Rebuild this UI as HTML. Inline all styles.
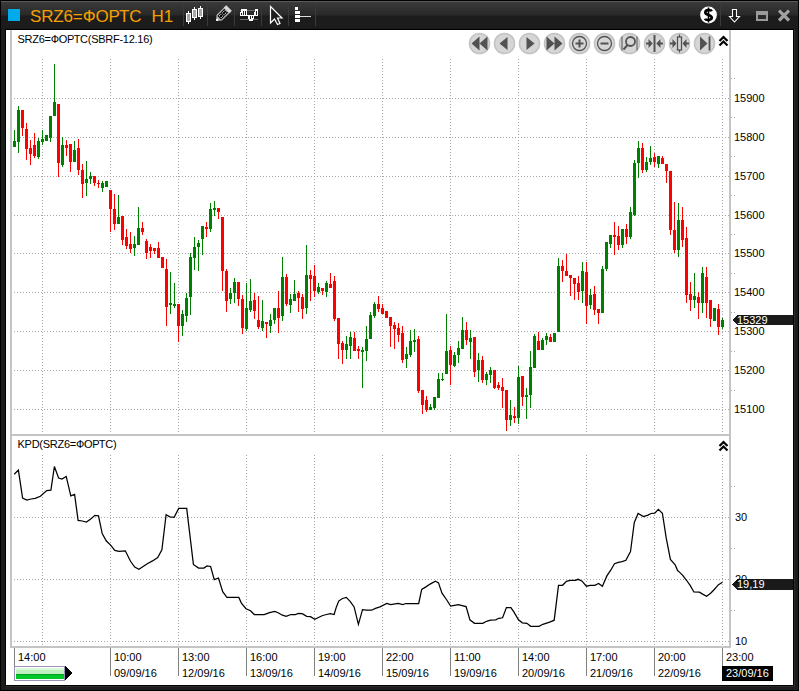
<!DOCTYPE html>
<html><head><meta charset="utf-8">
<style>
html,body{margin:0;padding:0;width:799px;height:691px;overflow:hidden;background:#1c1c1c;}
*{box-sizing:border-box;}
#frame{position:absolute;left:0;top:0;width:799px;height:691px;border:1px solid #000;background:#1c1c1c;}
#titlebar{position:absolute;left:1px;top:1px;width:797px;height:28px;background:linear-gradient(#5a5a5a 0px,#5a5a5a 1px,#3a3a3a 1px,#292929 14px,#1c1c1c 15px,#1c1c1c 27px,#111 28px);}
#content{position:absolute;left:5px;top:29px;width:789px;height:657px;border:1px solid #000;background:#fff;overflow:hidden;}
.t{position:absolute;font-family:"Liberation Sans",sans-serif;font-size:11px;line-height:11px;color:#000;white-space:nowrap;}
.ttl{position:absolute;font-family:"Liberation Sans",sans-serif;font-size:17px;line-height:17px;color:#f5a000;white-space:nowrap;}
svg{position:absolute;left:0;top:0;}
</style></head><body>
<div id="frame"></div>
<div id="titlebar"></div>
<div id="content"></div>
<div style="position:absolute;left:794px;top:29px;width:1px;height:658px;background:#2c2c2c"></div>
<div style="position:absolute;left:5px;top:686px;width:790px;height:1px;background:#2c2c2c"></div>
<svg width="799" height="691" viewBox="0 0 799 691" shape-rendering="crispEdges">
<!-- title bar stuff -->
<rect x="8" y="9" width="12" height="12" fill="#00aaeb"/>
<g fill="#3a3a3a">
<rect x="183" y="5" width="1" height="21"/><rect x="207" y="5" width="1" height="21"/><rect x="234" y="5" width="1" height="21"/>
<rect x="261" y="5" width="1" height="21"/><rect x="288" y="5" width="1" height="21"/><rect x="315" y="5" width="1" height="21"/>
<rect x="720" y="5" width="1" height="21"/>
</g>
</svg>
<svg width="799" height="691" viewBox="0 0 799 691">
<!-- candles icon -->
<g fill="#a8a8a8" stroke="#fff" stroke-width="1">
<path d="M188.5 11 V24 M194.5 7 V20 M200.5 6 V19" stroke="#fff" fill="none"/>
<rect x="186.5" y="13.5" width="4" height="8"/>
<rect x="192.5" y="9.5" width="4" height="8"/>
<rect x="198.5" y="8.5" width="4" height="8"/>
</g>
<!-- pencil -->
<g transform="translate(222.8,14.2) rotate(-45)">
<path d="M-9.5 0 L-5 -3.9 H8.5 V3.9 H-5 Z" fill="#b4b4b4"/>
<rect x="-5" y="-2.6" width="10" height="5.2" fill="#050505"/>
<rect x="5.3" y="-3.9" width="3.5" height="7.8" fill="#d8d8d8"/>
<circle cx="-8" cy="0" r="1.1" fill="#fff"/>
<g fill="#fff"><rect x="-4" y="-1.7" width="1" height="1"/><rect x="-2" y="-1.7" width="1" height="1"/><rect x="0" y="-1.7" width="1" height="1"/><rect x="2" y="-1.7" width="1" height="1"/><rect x="4" y="-1.7" width="1" height="1"/>
<rect x="-4" y="0.7" width="1" height="1"/><rect x="-2" y="0.7" width="1" height="1"/><rect x="0" y="0.7" width="1" height="1"/><rect x="2" y="0.7" width="1" height="1"/><rect x="4" y="0.7" width="1" height="1"/></g>
</g>
<!-- bars icon -->
<g shape-rendering="crispEdges">
<rect x="240" y="10" width="18" height="1" fill="#6a6a6a"/>
<rect x="240" y="19" width="18" height="1" fill="#6a6a6a"/>
<g fill="#fff">
<rect x="240" y="12" width="2" height="4"/><rect x="241" y="9" width="6" height="7"/><rect x="240" y="15" width="18" height="1"/>
<rect x="248" y="15" width="6" height="4"/><rect x="249" y="18" width="4" height="3"/><rect x="255" y="9" width="3" height="7"/><rect x="254" y="12" width="2" height="4"/>
</g>
<g fill="#222"><rect x="241" y="13" width="1" height="2"/><rect x="243" y="11" width="1" height="4"/><rect x="245" y="11" width="1" height="4"/>
<rect x="250" y="16" width="1" height="3"/><rect x="252" y="16" width="1" height="2"/><rect x="256" y="11" width="1" height="4"/></g>
</g>
<!-- cursor arrow -->
<path d="M270.5 6.5 L270.5 23 L274.5 19 L277.5 24.5 L280 23.5 L277.5 18 L282 18 Z" fill="#1e1e1e" stroke="#fff" stroke-width="1.2" stroke-linejoin="miter"/>
<!-- depth icon -->
<g fill="#fff">
<rect x="295" y="7" width="3" height="3"/><rect x="295" y="11" width="5" height="3"/><rect x="295" y="15" width="5" height="3"/><rect x="295" y="19" width="5" height="3"/>
<rect x="300" y="16" width="11" height="1" fill="#ddd"/>
</g>
<!-- dollar -->
<circle cx="708.5" cy="15" r="8.4" fill="#fff"/>
<path d="M708.5 7.5 V22.5" stroke="#000" stroke-width="1.6"/><path d="M711.8 11.3 C711 9.6 705.3 9.4 705.3 12.4 C705.3 15.4 711.8 14.4 711.8 17.6 C711.8 20.6 705.8 20.4 705 18.7" fill="none" stroke="#000" stroke-width="2.6"/>
<!-- down arrow -->
<path d="M732.5 9.5 H736.5 V16.5 H739.5 L734.5 22 L729.5 16.5 H732.5 Z" fill="#1e1e1e" stroke="#fff" stroke-width="1.1"/>
<!-- restore -->
<rect x="756" y="11" width="12" height="10" fill="#9a9a9a"/>
<rect x="758" y="15" width="8" height="4" fill="#2a2a2a"/>
<!-- close -->
<path d="M779 10.5 L789 20.5 M789 10.5 L779 20.5" stroke="#1a1a1a" stroke-width="5"/><path d="M779 10.5 L789 20.5 M789 10.5 L779 20.5" stroke="#a0a0a0" stroke-width="3.2"/>
</svg>
<div class="ttl" style="left:30px;top:8px;letter-spacing:-0.15px;">SRZ6=ФОРТС</div>
<div class="ttl" style="left:151.5px;top:8px;">H1</div>

<svg width="799" height="691" viewBox="0 0 799 691" shape-rendering="crispEdges">
<!-- panel lines -->
<rect x="10" y="30" width="2" height="618" fill="#c4c4c4"/>
<rect x="729" y="30" width="2" height="618" fill="#c4c4c4"/>
<rect x="10" y="434" width="721" height="2" fill="#c4c4c4"/>
<rect x="10" y="646" width="721" height="2" fill="#c4c4c4"/>
<line x1="14" y1="98.5" x2="729" y2="98.5" stroke="#a8a8a8" stroke-width="1" stroke-dasharray="1 2"/>
<line x1="14" y1="137.5" x2="729" y2="137.5" stroke="#a8a8a8" stroke-width="1" stroke-dasharray="1 2"/>
<line x1="14" y1="176.5" x2="729" y2="176.5" stroke="#a8a8a8" stroke-width="1" stroke-dasharray="1 2"/>
<line x1="14" y1="215.5" x2="729" y2="215.5" stroke="#a8a8a8" stroke-width="1" stroke-dasharray="1 2"/>
<line x1="14" y1="253.5" x2="729" y2="253.5" stroke="#a8a8a8" stroke-width="1" stroke-dasharray="1 2"/>
<line x1="14" y1="292.5" x2="729" y2="292.5" stroke="#a8a8a8" stroke-width="1" stroke-dasharray="1 2"/>
<line x1="14" y1="331.5" x2="729" y2="331.5" stroke="#a8a8a8" stroke-width="1" stroke-dasharray="1 2"/>
<line x1="14" y1="370.5" x2="729" y2="370.5" stroke="#a8a8a8" stroke-width="1" stroke-dasharray="1 2"/>
<line x1="14" y1="409.5" x2="729" y2="409.5" stroke="#a8a8a8" stroke-width="1" stroke-dasharray="1 2"/>
<line x1="14" y1="517.5" x2="729" y2="517.5" stroke="#a8a8a8" stroke-width="1" stroke-dasharray="1 2"/>
<line x1="14" y1="579.5" x2="729" y2="579.5" stroke="#a8a8a8" stroke-width="1" stroke-dasharray="1 2"/>
<line x1="14" y1="641.5" x2="729" y2="641.5" stroke="#a8a8a8" stroke-width="1" stroke-dasharray="1 2"/>
<line x1="42.5" y1="59" x2="42.5" y2="434" stroke="#a8a8a8" stroke-width="1" stroke-dasharray="1 2"/>
<line x1="42.5" y1="455" x2="42.5" y2="646" stroke="#a8a8a8" stroke-width="1" stroke-dasharray="1 2"/>
<line x1="110.5" y1="59" x2="110.5" y2="434" stroke="#a8a8a8" stroke-width="1" stroke-dasharray="1 2"/>
<line x1="110.5" y1="455" x2="110.5" y2="646" stroke="#a8a8a8" stroke-width="1" stroke-dasharray="1 2"/>
<line x1="178.5" y1="59" x2="178.5" y2="434" stroke="#a8a8a8" stroke-width="1" stroke-dasharray="1 2"/>
<line x1="178.5" y1="455" x2="178.5" y2="646" stroke="#a8a8a8" stroke-width="1" stroke-dasharray="1 2"/>
<line x1="246.5" y1="59" x2="246.5" y2="434" stroke="#a8a8a8" stroke-width="1" stroke-dasharray="1 2"/>
<line x1="246.5" y1="455" x2="246.5" y2="646" stroke="#a8a8a8" stroke-width="1" stroke-dasharray="1 2"/>
<line x1="314.5" y1="59" x2="314.5" y2="434" stroke="#a8a8a8" stroke-width="1" stroke-dasharray="1 2"/>
<line x1="314.5" y1="455" x2="314.5" y2="646" stroke="#a8a8a8" stroke-width="1" stroke-dasharray="1 2"/>
<line x1="382.5" y1="59" x2="382.5" y2="434" stroke="#a8a8a8" stroke-width="1" stroke-dasharray="1 2"/>
<line x1="382.5" y1="455" x2="382.5" y2="646" stroke="#a8a8a8" stroke-width="1" stroke-dasharray="1 2"/>
<line x1="450.5" y1="59" x2="450.5" y2="434" stroke="#a8a8a8" stroke-width="1" stroke-dasharray="1 2"/>
<line x1="450.5" y1="455" x2="450.5" y2="646" stroke="#a8a8a8" stroke-width="1" stroke-dasharray="1 2"/>
<line x1="518.5" y1="59" x2="518.5" y2="434" stroke="#a8a8a8" stroke-width="1" stroke-dasharray="1 2"/>
<line x1="518.5" y1="455" x2="518.5" y2="646" stroke="#a8a8a8" stroke-width="1" stroke-dasharray="1 2"/>
<line x1="586.5" y1="59" x2="586.5" y2="434" stroke="#a8a8a8" stroke-width="1" stroke-dasharray="1 2"/>
<line x1="586.5" y1="455" x2="586.5" y2="646" stroke="#a8a8a8" stroke-width="1" stroke-dasharray="1 2"/>
<line x1="654.5" y1="59" x2="654.5" y2="434" stroke="#a8a8a8" stroke-width="1" stroke-dasharray="1 2"/>
<line x1="654.5" y1="455" x2="654.5" y2="646" stroke="#a8a8a8" stroke-width="1" stroke-dasharray="1 2"/>
<line x1="722.5" y1="59" x2="722.5" y2="434" stroke="#a8a8a8" stroke-width="1" stroke-dasharray="1 2"/>
<line x1="722.5" y1="455" x2="722.5" y2="646" stroke="#a8a8a8" stroke-width="1" stroke-dasharray="1 2"/>
<rect x="731" y="117" width="1" height="1" fill="#a8a8a8"/><rect x="734" y="117" width="1" height="1" fill="#a8a8a8"/>
<rect x="731" y="156" width="1" height="1" fill="#a8a8a8"/><rect x="734" y="156" width="1" height="1" fill="#a8a8a8"/>
<rect x="731" y="195" width="1" height="1" fill="#a8a8a8"/><rect x="734" y="195" width="1" height="1" fill="#a8a8a8"/>
<rect x="731" y="234" width="1" height="1" fill="#a8a8a8"/><rect x="734" y="234" width="1" height="1" fill="#a8a8a8"/>
<rect x="731" y="273" width="1" height="1" fill="#a8a8a8"/><rect x="734" y="273" width="1" height="1" fill="#a8a8a8"/>
<rect x="731" y="312" width="1" height="1" fill="#a8a8a8"/><rect x="734" y="312" width="1" height="1" fill="#a8a8a8"/>
<rect x="731" y="351" width="1" height="1" fill="#a8a8a8"/><rect x="734" y="351" width="1" height="1" fill="#a8a8a8"/>
<rect x="731" y="390" width="1" height="1" fill="#a8a8a8"/><rect x="734" y="390" width="1" height="1" fill="#a8a8a8"/>
<rect x="731" y="78" width="1" height="1" fill="#a8a8a8"/><rect x="734" y="78" width="1" height="1" fill="#a8a8a8"/>
<rect x="731" y="486" width="1" height="1" fill="#a8a8a8"/><rect x="734" y="486" width="1" height="1" fill="#a8a8a8"/>
<rect x="731" y="548" width="1" height="1" fill="#a8a8a8"/><rect x="734" y="548" width="1" height="1" fill="#a8a8a8"/>
<rect x="731" y="610" width="1" height="1" fill="#a8a8a8"/><rect x="734" y="610" width="1" height="1" fill="#a8a8a8"/>
<rect x="14" y="130" width="1" height="17" fill="#008000"/>
<rect x="13" y="141" width="3" height="6" fill="#008000"/>
<rect x="18" y="106" width="1" height="47" fill="#008000"/>
<rect x="17" y="110" width="3" height="32" fill="#008000"/>
<rect x="22" y="110" width="1" height="26" fill="#ff0000"/>
<rect x="21" y="110" width="3" height="18" fill="#ff0000"/>
<rect x="26" y="123" width="1" height="37" fill="#ff0000"/>
<rect x="25" y="129" width="3" height="20" fill="#ff0000"/>
<rect x="30" y="140" width="1" height="25" fill="#ff0000"/>
<rect x="29" y="148" width="3" height="6" fill="#ff0000"/>
<rect x="34" y="133" width="1" height="25" fill="#ff0000"/>
<rect x="33" y="145" width="3" height="11" fill="#ff0000"/>
<rect x="38" y="138" width="1" height="21" fill="#008000"/>
<rect x="37" y="141" width="3" height="16" fill="#008000"/>
<rect x="42" y="130" width="1" height="15" fill="#008000"/>
<rect x="41" y="139" width="3" height="3" fill="#008000"/>
<rect x="46" y="135" width="1" height="6" fill="#008000"/>
<rect x="45" y="135" width="3" height="6" fill="#008000"/>
<rect x="50" y="116" width="1" height="26" fill="#008000"/>
<rect x="49" y="116" width="3" height="22" fill="#008000"/>
<rect x="54" y="64" width="1" height="52" fill="#008000"/>
<rect x="53" y="102" width="3" height="14" fill="#008000"/>
<rect x="58" y="104" width="1" height="73" fill="#ff0000"/>
<rect x="57" y="104" width="3" height="59" fill="#ff0000"/>
<rect x="62" y="137" width="1" height="30" fill="#008000"/>
<rect x="61" y="145" width="3" height="20" fill="#008000"/>
<rect x="66" y="140" width="1" height="16" fill="#ff0000"/>
<rect x="65" y="145" width="3" height="3" fill="#ff0000"/>
<rect x="70" y="144" width="1" height="28" fill="#ff0000"/>
<rect x="69" y="144" width="3" height="18" fill="#ff0000"/>
<rect x="74" y="141" width="1" height="21" fill="#008000"/>
<rect x="73" y="150" width="3" height="12" fill="#008000"/>
<rect x="78" y="139" width="1" height="36" fill="#ff0000"/>
<rect x="77" y="148" width="3" height="22" fill="#ff0000"/>
<rect x="82" y="164" width="1" height="34" fill="#ff0000"/>
<rect x="81" y="170" width="3" height="14" fill="#ff0000"/>
<rect x="86" y="161" width="1" height="35" fill="#008000"/>
<rect x="85" y="179" width="3" height="4" fill="#008000"/>
<rect x="90" y="172" width="1" height="12" fill="#008000"/>
<rect x="89" y="176" width="3" height="3" fill="#008000"/>
<rect x="94" y="176" width="1" height="10" fill="#ff0000"/>
<rect x="93" y="176" width="3" height="7" fill="#ff0000"/>
<rect x="98" y="180" width="1" height="8" fill="#ff0000"/>
<rect x="97" y="183" width="3" height="1" fill="#ff0000"/>
<rect x="102" y="181" width="1" height="11" fill="#008000"/>
<rect x="101" y="183" width="3" height="5" fill="#008000"/>
<rect x="106" y="181" width="1" height="6" fill="#008000"/>
<rect x="105" y="181" width="3" height="6" fill="#008000"/>
<rect x="110" y="190" width="1" height="42" fill="#ff0000"/>
<rect x="109" y="190" width="3" height="19" fill="#ff0000"/>
<rect x="114" y="194" width="1" height="36" fill="#ff0000"/>
<rect x="113" y="209" width="3" height="15" fill="#ff0000"/>
<rect x="118" y="195" width="1" height="29" fill="#008000"/>
<rect x="117" y="217" width="3" height="7" fill="#008000"/>
<rect x="122" y="216" width="1" height="29" fill="#ff0000"/>
<rect x="121" y="216" width="3" height="24" fill="#ff0000"/>
<rect x="126" y="229" width="1" height="20" fill="#ff0000"/>
<rect x="125" y="237" width="3" height="9" fill="#ff0000"/>
<rect x="130" y="232" width="1" height="21" fill="#ff0000"/>
<rect x="129" y="244" width="3" height="5" fill="#ff0000"/>
<rect x="134" y="236" width="1" height="20" fill="#008000"/>
<rect x="133" y="244" width="3" height="4" fill="#008000"/>
<rect x="138" y="207" width="1" height="38" fill="#008000"/>
<rect x="137" y="228" width="3" height="17" fill="#008000"/>
<rect x="142" y="222" width="1" height="13" fill="#ff0000"/>
<rect x="141" y="228" width="3" height="4" fill="#ff0000"/>
<rect x="146" y="239" width="1" height="20" fill="#ff0000"/>
<rect x="145" y="241" width="3" height="12" fill="#ff0000"/>
<rect x="150" y="244" width="1" height="14" fill="#ff0000"/>
<rect x="149" y="247" width="3" height="4" fill="#ff0000"/>
<rect x="154" y="248" width="1" height="6" fill="#ff0000"/>
<rect x="153" y="248" width="3" height="3" fill="#ff0000"/>
<rect x="158" y="242" width="1" height="16" fill="#ff0000"/>
<rect x="157" y="248" width="3" height="10" fill="#ff0000"/>
<rect x="162" y="257" width="1" height="11" fill="#ff0000"/>
<rect x="161" y="257" width="3" height="11" fill="#ff0000"/>
<rect x="166" y="259" width="1" height="67" fill="#ff0000"/>
<rect x="165" y="269" width="3" height="38" fill="#ff0000"/>
<rect x="170" y="272" width="1" height="42" fill="#008000"/>
<rect x="169" y="303" width="3" height="2" fill="#008000"/>
<rect x="174" y="283" width="1" height="25" fill="#008000"/>
<rect x="173" y="304" width="3" height="2" fill="#008000"/>
<rect x="178" y="304" width="1" height="38" fill="#ff0000"/>
<rect x="177" y="304" width="3" height="22" fill="#ff0000"/>
<rect x="182" y="310" width="1" height="26" fill="#008000"/>
<rect x="181" y="314" width="3" height="12" fill="#008000"/>
<rect x="186" y="293" width="1" height="29" fill="#008000"/>
<rect x="185" y="298" width="3" height="18" fill="#008000"/>
<rect x="190" y="253" width="1" height="62" fill="#008000"/>
<rect x="189" y="257" width="3" height="40" fill="#008000"/>
<rect x="194" y="237" width="1" height="33" fill="#008000"/>
<rect x="193" y="247" width="3" height="11" fill="#008000"/>
<rect x="198" y="240" width="1" height="31" fill="#008000"/>
<rect x="197" y="243" width="3" height="4" fill="#008000"/>
<rect x="202" y="226" width="1" height="29" fill="#008000"/>
<rect x="201" y="226" width="3" height="13" fill="#008000"/>
<rect x="206" y="222" width="1" height="15" fill="#ff0000"/>
<rect x="205" y="227" width="3" height="2" fill="#ff0000"/>
<rect x="210" y="203" width="1" height="29" fill="#008000"/>
<rect x="209" y="209" width="3" height="20" fill="#008000"/>
<rect x="214" y="201" width="1" height="15" fill="#008000"/>
<rect x="213" y="208" width="3" height="2" fill="#008000"/>
<rect x="218" y="208" width="1" height="11" fill="#ff0000"/>
<rect x="217" y="208" width="3" height="4" fill="#ff0000"/>
<rect x="222" y="217" width="1" height="74" fill="#ff0000"/>
<rect x="221" y="217" width="3" height="54" fill="#ff0000"/>
<rect x="226" y="269" width="1" height="43" fill="#ff0000"/>
<rect x="225" y="271" width="3" height="30" fill="#ff0000"/>
<rect x="230" y="288" width="1" height="16" fill="#008000"/>
<rect x="229" y="293" width="3" height="6" fill="#008000"/>
<rect x="234" y="278" width="1" height="25" fill="#008000"/>
<rect x="233" y="282" width="3" height="11" fill="#008000"/>
<rect x="238" y="282" width="1" height="24" fill="#ff0000"/>
<rect x="237" y="282" width="3" height="17" fill="#ff0000"/>
<rect x="242" y="295" width="1" height="39" fill="#ff0000"/>
<rect x="241" y="299" width="3" height="29" fill="#ff0000"/>
<rect x="246" y="283" width="1" height="48" fill="#008000"/>
<rect x="245" y="308" width="3" height="21" fill="#008000"/>
<rect x="250" y="279" width="1" height="33" fill="#008000"/>
<rect x="249" y="301" width="3" height="9" fill="#008000"/>
<rect x="254" y="293" width="1" height="26" fill="#ff0000"/>
<rect x="253" y="300" width="3" height="11" fill="#ff0000"/>
<rect x="258" y="296" width="1" height="33" fill="#ff0000"/>
<rect x="257" y="320" width="3" height="7" fill="#ff0000"/>
<rect x="262" y="300" width="1" height="31" fill="#008000"/>
<rect x="261" y="321" width="3" height="7" fill="#008000"/>
<rect x="266" y="322" width="1" height="16" fill="#ff0000"/>
<rect x="265" y="322" width="3" height="2" fill="#ff0000"/>
<rect x="270" y="314" width="1" height="19" fill="#008000"/>
<rect x="269" y="320" width="3" height="6" fill="#008000"/>
<rect x="274" y="308" width="1" height="16" fill="#008000"/>
<rect x="273" y="308" width="3" height="12" fill="#008000"/>
<rect x="278" y="291" width="1" height="42" fill="#ff0000"/>
<rect x="277" y="308" width="3" height="10" fill="#ff0000"/>
<rect x="282" y="257" width="1" height="64" fill="#008000"/>
<rect x="281" y="277" width="3" height="39" fill="#008000"/>
<rect x="286" y="274" width="1" height="32" fill="#ff0000"/>
<rect x="285" y="277" width="3" height="27" fill="#ff0000"/>
<rect x="290" y="294" width="1" height="19" fill="#008000"/>
<rect x="289" y="299" width="3" height="6" fill="#008000"/>
<rect x="294" y="280" width="1" height="21" fill="#008000"/>
<rect x="293" y="294" width="3" height="7" fill="#008000"/>
<rect x="298" y="291" width="1" height="21" fill="#ff0000"/>
<rect x="297" y="293" width="3" height="5" fill="#ff0000"/>
<rect x="302" y="294" width="1" height="25" fill="#ff0000"/>
<rect x="301" y="297" width="3" height="12" fill="#ff0000"/>
<rect x="306" y="245" width="1" height="69" fill="#008000"/>
<rect x="305" y="275" width="3" height="33" fill="#008000"/>
<rect x="310" y="270" width="1" height="31" fill="#ff0000"/>
<rect x="309" y="275" width="3" height="4" fill="#ff0000"/>
<rect x="314" y="265" width="1" height="32" fill="#ff0000"/>
<rect x="313" y="276" width="3" height="15" fill="#ff0000"/>
<rect x="318" y="283" width="1" height="11" fill="#008000"/>
<rect x="317" y="287" width="3" height="5" fill="#008000"/>
<rect x="322" y="288" width="1" height="7" fill="#ff0000"/>
<rect x="321" y="288" width="3" height="3" fill="#ff0000"/>
<rect x="326" y="281" width="1" height="16" fill="#008000"/>
<rect x="325" y="283" width="3" height="9" fill="#008000"/>
<rect x="330" y="273" width="1" height="15" fill="#ff0000"/>
<rect x="329" y="284" width="3" height="4" fill="#ff0000"/>
<rect x="334" y="276" width="1" height="45" fill="#ff0000"/>
<rect x="333" y="281" width="3" height="38" fill="#ff0000"/>
<rect x="338" y="318" width="1" height="41" fill="#ff0000"/>
<rect x="337" y="318" width="3" height="26" fill="#ff0000"/>
<rect x="342" y="341" width="1" height="23" fill="#ff0000"/>
<rect x="341" y="343" width="3" height="7" fill="#ff0000"/>
<rect x="346" y="336" width="1" height="23" fill="#008000"/>
<rect x="345" y="344" width="3" height="6" fill="#008000"/>
<rect x="350" y="332" width="1" height="27" fill="#008000"/>
<rect x="349" y="337" width="3" height="9" fill="#008000"/>
<rect x="354" y="332" width="1" height="19" fill="#ff0000"/>
<rect x="353" y="338" width="3" height="13" fill="#ff0000"/>
<rect x="358" y="346" width="1" height="13" fill="#ff0000"/>
<rect x="357" y="349" width="3" height="2" fill="#ff0000"/>
<rect x="362" y="347" width="1" height="41" fill="#008000"/>
<rect x="361" y="350" width="3" height="2" fill="#008000"/>
<rect x="366" y="326" width="1" height="35" fill="#008000"/>
<rect x="365" y="339" width="3" height="12" fill="#008000"/>
<rect x="370" y="312" width="1" height="27" fill="#008000"/>
<rect x="369" y="315" width="3" height="24" fill="#008000"/>
<rect x="374" y="302" width="1" height="16" fill="#008000"/>
<rect x="373" y="304" width="3" height="12" fill="#008000"/>
<rect x="378" y="296" width="1" height="16" fill="#ff0000"/>
<rect x="377" y="304" width="3" height="5" fill="#ff0000"/>
<rect x="382" y="304" width="1" height="10" fill="#ff0000"/>
<rect x="381" y="308" width="3" height="6" fill="#ff0000"/>
<rect x="386" y="311" width="1" height="7" fill="#ff0000"/>
<rect x="385" y="311" width="3" height="7" fill="#ff0000"/>
<rect x="390" y="317" width="1" height="30" fill="#ff0000"/>
<rect x="389" y="317" width="3" height="9" fill="#ff0000"/>
<rect x="394" y="322" width="1" height="27" fill="#ff0000"/>
<rect x="393" y="325" width="3" height="4" fill="#ff0000"/>
<rect x="398" y="323" width="1" height="19" fill="#ff0000"/>
<rect x="397" y="328" width="3" height="7" fill="#ff0000"/>
<rect x="402" y="326" width="1" height="37" fill="#ff0000"/>
<rect x="401" y="333" width="3" height="27" fill="#ff0000"/>
<rect x="406" y="347" width="1" height="21" fill="#008000"/>
<rect x="405" y="354" width="3" height="5" fill="#008000"/>
<rect x="410" y="330" width="1" height="27" fill="#008000"/>
<rect x="409" y="341" width="3" height="14" fill="#008000"/>
<rect x="414" y="329" width="1" height="23" fill="#008000"/>
<rect x="413" y="340" width="3" height="2" fill="#008000"/>
<rect x="418" y="336" width="1" height="57" fill="#ff0000"/>
<rect x="417" y="339" width="3" height="52" fill="#ff0000"/>
<rect x="422" y="390" width="1" height="24" fill="#ff0000"/>
<rect x="421" y="390" width="3" height="15" fill="#ff0000"/>
<rect x="426" y="396" width="1" height="16" fill="#ff0000"/>
<rect x="425" y="400" width="3" height="10" fill="#ff0000"/>
<rect x="430" y="404" width="1" height="6" fill="#008000"/>
<rect x="429" y="407" width="3" height="3" fill="#008000"/>
<rect x="434" y="397" width="1" height="13" fill="#008000"/>
<rect x="433" y="397" width="3" height="11" fill="#008000"/>
<rect x="438" y="373" width="1" height="25" fill="#008000"/>
<rect x="437" y="379" width="3" height="19" fill="#008000"/>
<rect x="442" y="373" width="1" height="8" fill="#008000"/>
<rect x="441" y="379" width="3" height="1" fill="#008000"/>
<rect x="446" y="314" width="1" height="60" fill="#008000"/>
<rect x="445" y="351" width="3" height="23" fill="#008000"/>
<rect x="450" y="346" width="1" height="39" fill="#ff0000"/>
<rect x="449" y="350" width="3" height="15" fill="#ff0000"/>
<rect x="454" y="352" width="1" height="15" fill="#008000"/>
<rect x="453" y="355" width="3" height="11" fill="#008000"/>
<rect x="458" y="341" width="1" height="22" fill="#008000"/>
<rect x="457" y="348" width="3" height="7" fill="#008000"/>
<rect x="462" y="317" width="1" height="32" fill="#008000"/>
<rect x="461" y="330" width="3" height="19" fill="#008000"/>
<rect x="466" y="322" width="1" height="23" fill="#ff0000"/>
<rect x="465" y="330" width="3" height="10" fill="#ff0000"/>
<rect x="470" y="330" width="1" height="29" fill="#008000"/>
<rect x="469" y="338" width="3" height="4" fill="#008000"/>
<rect x="474" y="337" width="1" height="40" fill="#ff0000"/>
<rect x="473" y="337" width="3" height="35" fill="#ff0000"/>
<rect x="478" y="353" width="1" height="29" fill="#008000"/>
<rect x="477" y="360" width="3" height="10" fill="#008000"/>
<rect x="482" y="356" width="1" height="27" fill="#ff0000"/>
<rect x="481" y="360" width="3" height="20" fill="#ff0000"/>
<rect x="486" y="372" width="1" height="13" fill="#008000"/>
<rect x="485" y="374" width="3" height="6" fill="#008000"/>
<rect x="490" y="367" width="1" height="16" fill="#008000"/>
<rect x="489" y="370" width="3" height="5" fill="#008000"/>
<rect x="494" y="370" width="1" height="19" fill="#ff0000"/>
<rect x="493" y="370" width="3" height="18" fill="#ff0000"/>
<rect x="498" y="382" width="1" height="8" fill="#ff0000"/>
<rect x="497" y="385" width="3" height="3" fill="#ff0000"/>
<rect x="502" y="378" width="1" height="30" fill="#ff0000"/>
<rect x="501" y="387" width="3" height="4" fill="#ff0000"/>
<rect x="506" y="390" width="1" height="41" fill="#ff0000"/>
<rect x="505" y="390" width="3" height="30" fill="#ff0000"/>
<rect x="510" y="400" width="1" height="26" fill="#008000"/>
<rect x="509" y="415" width="3" height="5" fill="#008000"/>
<rect x="514" y="407" width="1" height="16" fill="#ff0000"/>
<rect x="513" y="416" width="3" height="2" fill="#ff0000"/>
<rect x="518" y="366" width="1" height="58" fill="#008000"/>
<rect x="517" y="377" width="3" height="41" fill="#008000"/>
<rect x="522" y="376" width="1" height="30" fill="#ff0000"/>
<rect x="521" y="376" width="3" height="21" fill="#ff0000"/>
<rect x="526" y="388" width="1" height="31" fill="#008000"/>
<rect x="525" y="395" width="3" height="2" fill="#008000"/>
<rect x="530" y="351" width="1" height="57" fill="#008000"/>
<rect x="529" y="367" width="3" height="28" fill="#008000"/>
<rect x="534" y="334" width="1" height="34" fill="#008000"/>
<rect x="533" y="336" width="3" height="32" fill="#008000"/>
<rect x="538" y="332" width="1" height="18" fill="#ff0000"/>
<rect x="537" y="341" width="3" height="9" fill="#ff0000"/>
<rect x="542" y="338" width="1" height="12" fill="#008000"/>
<rect x="541" y="340" width="3" height="10" fill="#008000"/>
<rect x="546" y="333" width="1" height="12" fill="#008000"/>
<rect x="545" y="336" width="3" height="4" fill="#008000"/>
<rect x="550" y="334" width="1" height="8" fill="#ff0000"/>
<rect x="549" y="337" width="3" height="5" fill="#ff0000"/>
<rect x="554" y="333" width="1" height="9" fill="#008000"/>
<rect x="553" y="333" width="3" height="9" fill="#008000"/>
<rect x="558" y="258" width="1" height="74" fill="#008000"/>
<rect x="557" y="266" width="3" height="66" fill="#008000"/>
<rect x="562" y="260" width="1" height="22" fill="#ff0000"/>
<rect x="561" y="266" width="3" height="5" fill="#ff0000"/>
<rect x="566" y="254" width="1" height="22" fill="#ff0000"/>
<rect x="565" y="271" width="3" height="5" fill="#ff0000"/>
<rect x="570" y="275" width="1" height="21" fill="#ff0000"/>
<rect x="569" y="275" width="3" height="3" fill="#ff0000"/>
<rect x="574" y="278" width="1" height="22" fill="#ff0000"/>
<rect x="573" y="278" width="3" height="6" fill="#ff0000"/>
<rect x="578" y="276" width="1" height="24" fill="#ff0000"/>
<rect x="577" y="283" width="3" height="9" fill="#ff0000"/>
<rect x="582" y="262" width="1" height="41" fill="#008000"/>
<rect x="581" y="271" width="3" height="20" fill="#008000"/>
<rect x="586" y="262" width="1" height="62" fill="#ff0000"/>
<rect x="585" y="272" width="3" height="34" fill="#ff0000"/>
<rect x="590" y="289" width="1" height="20" fill="#008000"/>
<rect x="589" y="295" width="3" height="10" fill="#008000"/>
<rect x="594" y="286" width="1" height="29" fill="#ff0000"/>
<rect x="593" y="294" width="3" height="16" fill="#ff0000"/>
<rect x="598" y="309" width="1" height="15" fill="#ff0000"/>
<rect x="597" y="309" width="3" height="4" fill="#ff0000"/>
<rect x="602" y="266" width="1" height="47" fill="#008000"/>
<rect x="601" y="269" width="3" height="44" fill="#008000"/>
<rect x="606" y="242" width="1" height="29" fill="#008000"/>
<rect x="605" y="242" width="3" height="27" fill="#008000"/>
<rect x="610" y="235" width="1" height="13" fill="#008000"/>
<rect x="609" y="235" width="3" height="9" fill="#008000"/>
<rect x="614" y="222" width="1" height="33" fill="#ff0000"/>
<rect x="613" y="235" width="3" height="2" fill="#ff0000"/>
<rect x="618" y="226" width="1" height="24" fill="#ff0000"/>
<rect x="617" y="236" width="3" height="9" fill="#ff0000"/>
<rect x="622" y="229" width="1" height="19" fill="#008000"/>
<rect x="621" y="229" width="3" height="16" fill="#008000"/>
<rect x="626" y="224" width="1" height="20" fill="#ff0000"/>
<rect x="625" y="229" width="3" height="8" fill="#ff0000"/>
<rect x="630" y="207" width="1" height="32" fill="#008000"/>
<rect x="629" y="212" width="3" height="25" fill="#008000"/>
<rect x="634" y="160" width="1" height="56" fill="#008000"/>
<rect x="633" y="163" width="3" height="52" fill="#008000"/>
<rect x="638" y="141" width="1" height="37" fill="#008000"/>
<rect x="637" y="148" width="3" height="15" fill="#008000"/>
<rect x="642" y="143" width="1" height="30" fill="#ff0000"/>
<rect x="641" y="148" width="3" height="22" fill="#ff0000"/>
<rect x="646" y="157" width="1" height="15" fill="#008000"/>
<rect x="645" y="162" width="3" height="8" fill="#008000"/>
<rect x="650" y="146" width="1" height="19" fill="#008000"/>
<rect x="649" y="158" width="3" height="4" fill="#008000"/>
<rect x="654" y="153" width="1" height="14" fill="#ff0000"/>
<rect x="653" y="157" width="3" height="5" fill="#ff0000"/>
<rect x="658" y="156" width="1" height="12" fill="#008000"/>
<rect x="657" y="156" width="3" height="8" fill="#008000"/>
<rect x="662" y="156" width="1" height="8" fill="#ff0000"/>
<rect x="661" y="158" width="3" height="6" fill="#ff0000"/>
<rect x="666" y="164" width="1" height="19" fill="#ff0000"/>
<rect x="665" y="164" width="3" height="7" fill="#ff0000"/>
<rect x="670" y="171" width="1" height="64" fill="#ff0000"/>
<rect x="669" y="171" width="3" height="59" fill="#ff0000"/>
<rect x="674" y="202" width="1" height="51" fill="#ff0000"/>
<rect x="673" y="230" width="3" height="20" fill="#ff0000"/>
<rect x="678" y="203" width="1" height="54" fill="#008000"/>
<rect x="677" y="220" width="3" height="30" fill="#008000"/>
<rect x="682" y="207" width="1" height="40" fill="#ff0000"/>
<rect x="681" y="220" width="3" height="20" fill="#ff0000"/>
<rect x="686" y="227" width="1" height="76" fill="#ff0000"/>
<rect x="685" y="238" width="3" height="57" fill="#ff0000"/>
<rect x="690" y="282" width="1" height="29" fill="#ff0000"/>
<rect x="689" y="294" width="3" height="6" fill="#ff0000"/>
<rect x="694" y="273" width="1" height="35" fill="#008000"/>
<rect x="693" y="296" width="3" height="4" fill="#008000"/>
<rect x="698" y="292" width="1" height="27" fill="#ff0000"/>
<rect x="697" y="297" width="3" height="6" fill="#ff0000"/>
<rect x="702" y="267" width="1" height="46" fill="#008000"/>
<rect x="701" y="273" width="3" height="30" fill="#008000"/>
<rect x="706" y="267" width="1" height="51" fill="#ff0000"/>
<rect x="705" y="277" width="3" height="26" fill="#ff0000"/>
<rect x="710" y="300" width="1" height="27" fill="#ff0000"/>
<rect x="709" y="300" width="3" height="19" fill="#ff0000"/>
<rect x="714" y="308" width="1" height="13" fill="#008000"/>
<rect x="713" y="308" width="3" height="13" fill="#008000"/>
<rect x="718" y="304" width="1" height="31" fill="#ff0000"/>
<rect x="717" y="309" width="3" height="18" fill="#ff0000"/>
<rect x="722" y="318" width="1" height="11" fill="#008000"/>
<rect x="721" y="320" width="3" height="7" fill="#008000"/>
<!-- time ticks -->
<g fill="#808080">
<rect x="14" y="648" width="1" height="18"/><rect x="110" y="648" width="1" height="28"/><rect x="178" y="648" width="1" height="28"/><rect x="246" y="648" width="1" height="28"/><rect x="314" y="648" width="1" height="28"/><rect x="382" y="648" width="1" height="28"/><rect x="450" y="648" width="1" height="28"/><rect x="518" y="648" width="1" height="28"/><rect x="586" y="648" width="1" height="28"/><rect x="654" y="648" width="1" height="28"/><rect x="722" y="648" width="1" height="18"/>
</g>
<!-- price box -->
<path d="M732 320 L737 315 H793 V325 H737 Z" fill="#1a1a1a"/>
<path d="M732 584 L737 579 H793 V590 H737 Z" fill="#1a1a1a"/>
<!-- green progress -->
<rect x="14" y="666" width="51" height="15" fill="#fff" stroke="none"/>
<rect x="14.5" y="666.5" width="50" height="14" fill="none" stroke="#9a90b8"/>
<rect x="16" y="668" width="48" height="6" fill="#c0f0c0"/>
<rect x="16" y="668" width="48" height="2" fill="#d8fad8"/>
<rect x="16" y="674" width="48" height="5" fill="#00c828"/>
<rect x="16" y="674" width="48" height="1" fill="#00a020"/>
<path d="M65 666 L72 673 L65 680 Z" fill="#000"/>
<!-- date box -->
<rect x="722" y="666" width="51" height="15" fill="#000"/>
</svg>
<svg width="799" height="691" viewBox="0 0 799 691">
<polyline points="14.2,474.3 18.4,470.1 22.6,498.0 26.8,500.1 31.0,499.0 35.2,498.4 40.4,496.3 46.7,490.6 50.9,490.2 54.4,466.5 58.6,478.0 62.0,479.1 66.2,476.4 70.8,495.9 74.6,494.4 78.1,520.4 82.3,521.0 86.5,522.1 90.7,519.0 94.9,515.4 98.5,515.8 102.2,533.6 106.4,541.0 110.6,545.1 114.8,550.4 119.0,551.4 125.3,550.8 130.5,561.3 134.7,567.1 138.9,569.2 143.1,566.5 147.3,563.8 152.5,560.9 157.7,557.5 161.9,549.7 166.1,514.7 169.9,516.8 174.1,517.3 178.7,508.4 186.7,508.4 193.4,564.4 198.6,568.0 203.9,568.0 207.0,565.9 210.6,566.5 214.3,579.7 218.5,578.0 222.7,591.7 226.9,597.3 238.8,597.4 241.4,603.1 246.0,608.7 250.5,610.7 254.3,614.5 264.2,614.5 269.5,612.6 274.8,611.4 278.6,613.0 282.4,615.2 286.2,616.4 290.8,614.5 295.3,614.5 298.4,613.4 302.2,613.7 306.7,616.3 310.5,616.7 314.8,619.3 318.9,617.2 322.7,615.5 326.5,614.5 330.3,613.7 334.1,614.5 336.4,606.9 338.7,601.1 342.5,598.5 346.3,597.4 350.3,601.6 354.1,606.9 358.4,624.3 362.5,609.6 366.3,610.2 371.6,610.2 375.4,608.4 380.0,606.9 386.8,603.5 390.6,604.6 398.2,603.5 402.8,604.6 405.8,603.5 418.7,603.5 421.7,589.4 425.5,587.1 430.1,584.1 435.4,581.3 438.5,582.9 442.0,593.2 446.8,600.0 450.6,606.1 454.4,605.3 458.2,604.6 466.1,606.6 469.9,619.8 474.4,623.3 482.8,623.3 486.6,621.3 490.4,620.2 495.7,619.8 498.8,618.3 502.6,617.8 506.4,607.6 510.9,607.6 514.0,612.2 518.5,619.8 522.3,622.8 526.9,623.3 530.7,626.3 539.0,626.3 542.8,624.3 549.7,622.1 554.2,620.2 558.5,585.3 562.6,585.3 566.4,581.3 570.2,580.3 575.5,580.3 578.0,579.3 581.8,580.9 586.4,586.2 590.2,585.4 594.8,585.4 598.6,583.5 602.4,586.2 606.9,575.9 610.7,570.2 614.5,563.7 618.3,562.3 622.1,561.6 625.9,560.3 630.5,551.5 634.3,522.4 638.1,513.5 643.4,516.6 648.0,515.1 651.0,513.5 654.8,513.2 658.3,509.4 662.4,513.2 666.2,537.9 670.4,559.4 675.2,564.9 677.6,570.5 679.5,572.1 682.7,575.3 686.7,580.5 690.3,585.6 693.9,592.0 699.4,592.2 702.6,594.1 706.6,596.2 710.6,593.2 713.8,590.0 718.5,584.7 722.5,582.3" fill="none" stroke="#000" stroke-width="1.25" stroke-linejoin="miter"/>
<circle cx="479.5" cy="43.5" r="10" fill="#d6d6d6" stroke="#c4c4c4" stroke-width="1.6"/>
<circle cx="504.5" cy="43.5" r="10" fill="#d6d6d6" stroke="#c4c4c4" stroke-width="1.6"/>
<circle cx="529.5" cy="43.5" r="10" fill="#d6d6d6" stroke="#c4c4c4" stroke-width="1.6"/>
<circle cx="554.5" cy="43.5" r="10" fill="#d6d6d6" stroke="#c4c4c4" stroke-width="1.6"/>
<circle cx="579.5" cy="43.5" r="10" fill="#d6d6d6" stroke="#c4c4c4" stroke-width="1.6"/>
<circle cx="604.5" cy="43.5" r="10" fill="#d6d6d6" stroke="#c4c4c4" stroke-width="1.6"/>
<circle cx="629.5" cy="43.5" r="10" fill="#d6d6d6" stroke="#c4c4c4" stroke-width="1.6"/>
<circle cx="654.5" cy="43.5" r="10" fill="#d6d6d6" stroke="#c4c4c4" stroke-width="1.6"/>
<circle cx="679.5" cy="43.5" r="10" fill="#d6d6d6" stroke="#c4c4c4" stroke-width="1.6"/>
<circle cx="704.5" cy="43.5" r="10" fill="#d6d6d6" stroke="#c4c4c4" stroke-width="1.6"/>
<path d="M471.5 43.5 L479.5 36.5 L479.5 50.5 Z M479.5 43.5 L487.5 36.5 L487.5 50.5 Z" fill="#525252"/>
<path d="M499.5 43.5 L507.5 37.0 L507.5 50.0 Z" fill="#525252"/>
<path d="M534.5 43.5 L526.5 37.0 L526.5 50.0 Z" fill="#525252"/>
<path d="M562.5 43.5 L554.5 36.5 L554.5 50.5 Z M554.5 43.5 L546.5 36.5 L546.5 50.5 Z" fill="#525252"/>
<circle cx="579.5" cy="43.5" r="7" fill="none" stroke="#525252" stroke-width="1.3"/><path d="M575.5 43.5 H583.5 M579.5 39.5 V47.5" stroke="#525252" stroke-width="2"/>
<circle cx="604.5" cy="43.5" r="7" fill="none" stroke="#525252" stroke-width="1.3"/><path d="M600.5 43.5 H608.5" stroke="#525252" stroke-width="2"/>
<circle cx="630.5" cy="41.5" r="4.5" fill="none" stroke="#525252" stroke-width="1.8"/><path d="M627.5 45.0 L623.5 49.5" stroke="#525252" stroke-width="2"/><path d="M622.0 36.5 V50.5 M637.0 36.5 V50.5" stroke="#525252" stroke-width="1"/>
<path d="M654.5 35.0 V52.0" stroke="#525252" stroke-width="2"/><path d="M646.0 43.5 H649.5 M659.5 43.5 H663.0" stroke="#525252" stroke-width="1.8"/><path d="M652.7 43.5 L648.5 39.0 L648.5 48.0 Z M656.3 43.5 L660.5 39.0 L660.5 48.0 Z" fill="#525252"/>
<rect x="677.5" y="37.0" width="4" height="13" fill="none" stroke="#525252" stroke-width="1.3"/><path d="M679.5 34.5 V37.0 M679.5 50.0 V52.5" stroke="#525252" stroke-width="1.2"/><path d="M670.0 43.5 H673.5 M685.5 43.5 H689.0" stroke="#525252" stroke-width="1.8"/><path d="M676.5 43.5 L672.5 39.0 L672.5 48.0 Z M682.5 43.5 L686.5 39.0 L686.5 48.0 Z" fill="#525252"/>
<path d="M707.5 43.5 L700.0 36.5 L700.0 50.5 Z" fill="#525252"/><path d="M709.5 36.5 V50.5" stroke="#525252" stroke-width="1.8"/>
<path d="M719.5 41 L723.5 37 L727.5 41 M719.5 45.5 L723.5 41.5 L727.5 45.5" fill="none" stroke="#000" stroke-width="2.2"/>
<path d="M719.5 446 L723.5 442 L727.5 446 M719.5 450.5 L723.5 446.5 L727.5 450.5" fill="none" stroke="#000" stroke-width="2.2"/>
</svg>
<div class="t" style="left:17.5px;top:34px;background:#fff;letter-spacing:-0.27px;">SRZ6=ФОРТС(SBRF-12.16)</div>
<div class="t" style="left:17.5px;top:439px;background:#fff;letter-spacing:-0.27px;">KPD(SRZ6=ФОРТС)</div>
<div class="t" style="left:734px;top:93px;">15900</div><div class="t" style="left:734px;top:132px;">15800</div><div class="t" style="left:734px;top:171px;">15700</div><div class="t" style="left:734px;top:210px;">15600</div><div class="t" style="left:734px;top:248px;">15500</div><div class="t" style="left:734px;top:287px;">15400</div><div class="t" style="left:734px;top:326px;">15300</div><div class="t" style="left:734px;top:365px;">15200</div><div class="t" style="left:734px;top:404px;">15100</div>
<div class="t" style="left:737px;top:315px;color:#fff;">15329</div>
<div class="t" style="left:735px;top:512px;">30</div>
<div class="t" style="left:735px;top:574px;">20</div>
<div class="t" style="left:735px;top:636px;">10</div>
<div class="t" style="left:737px;top:579px;color:#fff;">19,19</div>
<div class="t" style="left:18px;top:652px;">14:00</div>
<div class="t" style="left:114px;top:652px;">10:00</div><div class="t" style="left:114px;top:668px;">09/09/16</div><div class="t" style="left:182px;top:652px;">13:00</div><div class="t" style="left:182px;top:668px;">12/09/16</div><div class="t" style="left:250px;top:652px;">16:00</div><div class="t" style="left:250px;top:668px;">13/09/16</div><div class="t" style="left:318px;top:652px;">19:00</div><div class="t" style="left:318px;top:668px;">14/09/16</div><div class="t" style="left:386px;top:652px;">22:00</div><div class="t" style="left:386px;top:668px;">15/09/16</div><div class="t" style="left:454px;top:652px;">11:00</div><div class="t" style="left:454px;top:668px;">19/09/16</div><div class="t" style="left:522px;top:652px;">14:00</div><div class="t" style="left:522px;top:668px;">20/09/16</div><div class="t" style="left:590px;top:652px;">17:00</div><div class="t" style="left:590px;top:668px;">21/09/16</div><div class="t" style="left:658px;top:652px;">20:00</div><div class="t" style="left:658px;top:668px;">22/09/16</div>
<div class="t" style="left:726px;top:652px;">23:00</div>
<div class="t" style="left:726px;top:668px;color:#fff;">23/09/16</div>
</body></html>
